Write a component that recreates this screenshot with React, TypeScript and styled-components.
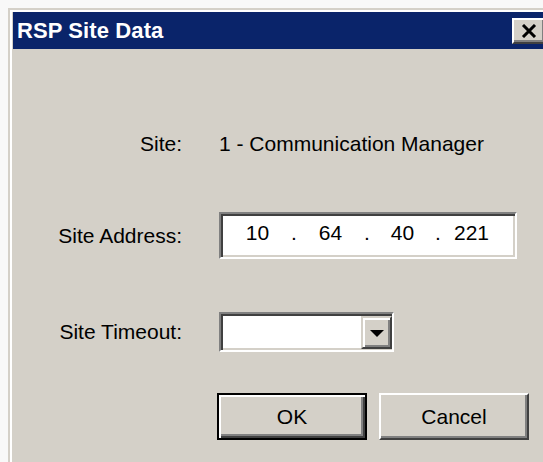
import React from "react";
import styled, { createGlobalStyle } from "styled-components";

const face = "#D4D0C8";
const shadow = "#808080";
const darkShadow = "#404040";

const GlobalStyle = createGlobalStyle`
  html, body {
    margin: 0;
    padding: 0;
    background: #f8f8f8;
    overflow: hidden;
  }
  body {
    font-family: "Liberation Sans", Arial, sans-serif;
    font-size: 21px;
    color: #000;
  }
`;

const Window = styled.div`
  margin: 8px 0 0 8px;
  width: 560px;
  height: 470px;
  border-top: 2px solid ${face};
  border-left: 2px solid ${face};
  background: ${face};
`;

const Frame = styled.div`
  height: 100%;
  border-top: 2px solid #fff;
  border-left: 2px solid #fff;
  background: ${face};
`;

const TitleBar = styled.div`
  height: 37px;
  margin-left: 1px;
  background: #0a246a;
  display: flex;
  align-items: center;
  justify-content: space-between;
  padding-left: 4px;
`;

const Title = styled.span`
  color: #fff;
  font-weight: bold;
  font-size: 22px;
  letter-spacing: 0.1px;
`;

const CloseButton = styled.div`
  width: 34px;
  height: 26px;
  margin-right: 24px;
  box-sizing: border-box;
  background: ${face};
  border-top: 2px solid #fff;
  border-left: 2px solid #fff;
  border-right: 2px solid ${darkShadow};
  border-bottom: 2px solid ${darkShadow};
  box-shadow: inset -2px -2px 0 ${shadow};
  display: flex;
  align-items: center;
  justify-content: center;
`;

const Body = styled.div`
  display: flex;
  flex-direction: column;
  padding-top: 80px;
`;

const Row = styled.div<{ $gap: number; $height: number }>`
  display: grid;
  grid-template-columns: 170px auto;
  column-gap: 37px;
  align-items: center;
  height: ${(p) => p.$height}px;
  margin-top: ${(p) => p.$gap}px;
`;

const Label = styled.span`
  text-align: right;
`;

const Sunken = styled.div<{ $width: number; $height: number }>`
  box-sizing: border-box;
  width: ${(p) => p.$width}px;
  height: ${(p) => p.$height}px;
  background: #fff;
  border-top: 2px solid ${shadow};
  border-left: 2px solid ${shadow};
  border-right: 2px solid #fff;
  border-bottom: 2px solid #fff;
  box-shadow: inset 2px 2px 0 ${darkShadow}, inset -2px -2px 0 ${face};
  display: flex;
  align-items: center;
`;

const IpFields = styled.div`
  display: flex;
  align-items: center;
  padding-left: 9px;
  margin-top: -6px;
`;

const Octet = styled.span<{ $width: number }>`
  width: ${(p) => p.$width}px;
  text-align: center;
`;

const Dot = styled.span`
  width: 18px;
  text-align: center;
`;

const ComboText = styled.div`
  flex: 1;
`;

const DropButton = styled.div`
  box-sizing: border-box;
  width: 31px;
  height: 33px;
  background: ${face};
  border-top: 2px solid ${face};
  border-left: 2px solid ${face};
  border-right: 2px solid ${darkShadow};
  border-bottom: 2px solid ${darkShadow};
  box-shadow: inset 2px 2px 0 #fff, inset -2px -2px 0 ${shadow};
  display: flex;
  align-items: center;
  justify-content: center;
`;

const Arrow = styled.div`
  width: 0;
  height: 0;
  border-left: 7px solid transparent;
  border-right: 7px solid transparent;
  border-top: 7px solid #000;
  margin-top: 2px;
`;

const Buttons = styled.div`
  display: flex;
  gap: 12px;
  margin: 41px 0 0 205px;
`;

const Button = styled.div<{ $default?: boolean }>`
  box-sizing: border-box;
  width: 150px;
  height: 47px;
  display: flex;
  align-items: center;
  justify-content: center;
  background: ${face};
  border-top: 2px solid ${(p) => (p.$default ? "#000" : "#fff")};
  border-left: 2px solid ${(p) => (p.$default ? "#000" : "#fff")};
  border-right: 2px solid ${(p) => (p.$default ? "#000" : darkShadow)};
  border-bottom: 2px solid ${(p) => (p.$default ? "#000" : darkShadow)};
  box-shadow: ${(p) =>
    p.$default
      ? `inset 2px 2px 0 #fff, inset -2px -2px 0 ${darkShadow}, inset -4px -4px 0 ${shadow}`
      : `inset -2px -2px 0 ${shadow}`};
`;

const octets = [
  { v: "10", w: 55 },
  { v: "64", w: 55 },
  { v: "40", w: 53 },
  { v: "221", w: 49 },
];

export default function App() {
  return (
    <>
      <GlobalStyle />
      <Window>
        <Frame>
          <TitleBar>
            <Title>RSP Site Data</Title>
            <CloseButton>
              <svg width="16" height="14" viewBox="0 0 16 14">
                <path d="M2 1 L14 13 M14 1 L2 13" stroke="#000" strokeWidth="3" />
              </svg>
            </CloseButton>
          </TitleBar>
          <Body>
            <Row $gap={0} $height={30}>
              <Label>Site:</Label>
              <span>1 - Communication Manager</span>
            </Row>
            <Row $gap={53} $height={47}>
              <Label>Site Address:</Label>
              <Sunken $width={298} $height={47}>
                <IpFields>
                  {octets.map((o, i) => (
                    <React.Fragment key={o.v}>
                      <Octet $width={o.w}>{o.v}</Octet>
                      {i < octets.length - 1 && <Dot>.</Dot>}
                    </React.Fragment>
                  ))}
                </IpFields>
              </Sunken>
            </Row>
            <Row $gap={53} $height={40}>
              <Label>Site Timeout:</Label>
              <Sunken $width={175} $height={40}>
                <ComboText />
                <DropButton>
                  <Arrow />
                </DropButton>
              </Sunken>
            </Row>
            <Buttons>
              <Button $default>OK</Button>
              <Button>Cancel</Button>
            </Buttons>
          </Body>
        </Frame>
      </Window>
    </>
  );
}
